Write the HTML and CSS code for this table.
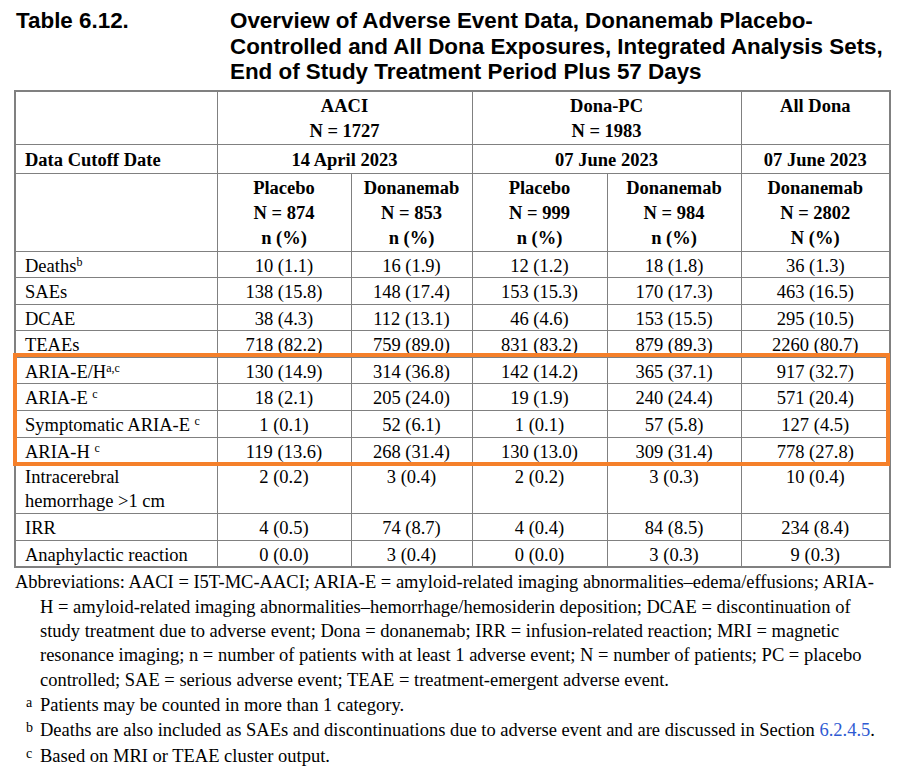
FILE: index.html
```html
<!DOCTYPE html>
<html>
<head>
<meta charset="utf-8">
<link rel="stylesheet" href="styles.css">
</head>
<body>
<div class="title">
  <div class="tnum">Table 6.12.</div>
  <div class="ttext">Overview of Adverse Event Data, Donanemab Placebo-<br>Controlled and All Dona Exposures, Integrated Analysis Sets,<br>End of Study Treatment Period Plus 57 Days</div>
</div>
<div class="tablewrap">
  <table class="ae">
    <colgroup>
      <col class="c1"><col class="c2"><col class="c3"><col class="c4"><col class="c5"><col class="c6">
    </colgroup>
    <thead>
      <tr class="h1">
        <th></th>
        <th colspan="2">AACI<br>N = 1727</th>
        <th colspan="2">Dona-PC<br>N = 1983</th>
        <th>All Dona</th>
      </tr>
      <tr class="h2">
        <th class="lbl">Data Cutoff Date</th>
        <th colspan="2">14 April 2023</th>
        <th colspan="2">07 June 2023</th>
        <th>07 June 2023</th>
      </tr>
      <tr class="h3">
        <th></th>
        <th>Placebo<br>N = 874<br>n (%)</th>
        <th>Donanemab<br>N = 853<br>n (%)</th>
        <th>Placebo<br>N = 999<br>n (%)</th>
        <th>Donanemab<br>N = 984<br>n (%)</th>
        <th>Donanemab<br>N = 2802<br>N (%)</th>
      </tr>
    </thead>
    <tbody>
      <tr><td class="lbl">Deaths<sup>b</sup></td><td>10 (1.1)</td><td>16 (1.9)</td><td>12 (1.2)</td><td>18 (1.8)</td><td>36 (1.3)</td></tr>
      <tr><td class="lbl">SAEs</td><td>138 (15.8)</td><td>148 (17.4)</td><td>153 (15.3)</td><td>170 (17.3)</td><td>463 (16.5)</td></tr>
      <tr><td class="lbl">DCAE</td><td>38 (4.3)</td><td>112 (13.1)</td><td>46 (4.6)</td><td>153 (15.5)</td><td>295 (10.5)</td></tr>
      <tr><td class="lbl">TEAEs</td><td>718 (82.2)</td><td>759 (89.0)</td><td>831 (83.2)</td><td>879 (89.3)</td><td>2260 (80.7)</td></tr>
      <tr><td class="lbl">ARIA-E/H<sup>a,c</sup></td><td>130 (14.9)</td><td>314 (36.8)</td><td>142 (14.2)</td><td>365 (37.1)</td><td>917 (32.7)</td></tr>
      <tr><td class="lbl">ARIA-E <sup>c</sup></td><td>18 (2.1)</td><td>205 (24.0)</td><td>19 (1.9)</td><td>240 (24.4)</td><td>571 (20.4)</td></tr>
      <tr><td class="lbl">Symptomatic ARIA-E <sup>c</sup></td><td>1 (0.1)</td><td>52 (6.1)</td><td>1 (0.1)</td><td>57 (5.8)</td><td>127 (4.5)</td></tr>
      <tr><td class="lbl">ARIA-H <sup>c</sup></td><td>119 (13.6)</td><td>268 (31.4)</td><td>130 (13.0)</td><td>309 (31.4)</td><td>778 (27.8)</td></tr>
      <tr class="two"><td class="lbl">Intracerebral<br>hemorrhage &gt;1 cm</td><td>2 (0.2)</td><td>3 (0.4)</td><td>2 (0.2)</td><td>3 (0.3)</td><td>10 (0.4)</td></tr>
      <tr><td class="lbl">IRR</td><td>4 (0.5)</td><td>74 (8.7)</td><td>4 (0.4)</td><td>84 (8.5)</td><td>234 (8.4)</td></tr>
      <tr><td class="lbl">Anaphylactic reaction</td><td>0 (0.0)</td><td>3 (0.4)</td><td>0 (0.0)</td><td>3 (0.3)</td><td>9 (0.3)</td></tr>
    </tbody>
  </table>
  <div class="highlight"></div>
</div>
<div class="notes">
  <p class="abbr">Abbreviations: AACI = I5T-MC-AACI; ARIA-E = amyloid-related imaging abnormalities–edema/effusions; ARIA-H = amyloid-related imaging abnormalities–hemorrhage/hemosiderin deposition; DCAE = discontinuation of study treatment due to adverse event; Dona = donanemab; IRR = infusion-related reaction; MRI = magnetic resonance imaging; n = number of patients with at least 1 adverse event; N = number of patients; PC = placebo controlled; SAE = serious adverse event; TEAE = treatment-emergent adverse event.</p>
  <div class="fn"><span class="mark">a</span><span>Patients may be counted in more than 1 category.</span></div>
  <div class="fn"><span class="mark">b</span><span>Deaths are also included as SAEs and discontinuations due to adverse event and are discussed in Section <span class="link">6.2.4.5</span>.</span></div>
  <div class="fn"><span class="mark">c</span><span>Based on MRI or TEAE cluster output.</span></div>
</div>
</body>
</html>
```

FILE: styles.css
```css
html, body {
  margin: 0;
  padding: 0;
  background: #ffffff;
}
body {
  padding: 8px 0 0 0;
  color: #000;
  font-family: "Liberation Serif", "Times New Roman", serif;
}
.title {
  display: flex;
  font-family: "Liberation Sans", Arial, sans-serif;
  font-weight: bold;
  font-size: 22.4px;
  line-height: 25.5px;
  white-space: nowrap;
}
.tnum {
  width: 214px;
  padding-left: 16px;
  box-sizing: border-box;
  flex: 0 0 214px;
}
.ttext {
  padding-left: 16px;
}
.tablewrap {
  position: relative;
  margin: 5px 0 0 14px;
  width: 875px;
}
.ae {
  border-collapse: collapse;
  table-layout: fixed;
  width: 875px;
  border: 2px solid #808080;
  font-size: 18.5px;
}
.c1 { width: 202px; }
.c2 { width: 134px; }
.c3 { width: 121px; }
.c4 { width: 135px; }
.c5 { width: 134px; }
.c6 { width: 149px; }
.ae th, .ae td {
  border: 1px solid #808080;
  vertical-align: top;
  text-align: center;
  padding: 0 4px;
  white-space: nowrap;
}
.ae th {
  font-weight: bold;
  line-height: 25px;
}
.h1 th { padding-top: 2px; height: 50px; }
.h2 th { padding-top: 3px; }
.h3 th { padding-top: 2px; }
.ae td {
  line-height: 21.6px;
  padding-top: 4px;
}
.ae tr.two td {
  line-height: 24px;
  padding-top: 1px;
}
.ae .lbl {
  text-align: left;
  padding-left: 9px;
}
sup {
  font-size: 12px;
  line-height: 0;
  vertical-align: 6px;
}
.highlight {
  position: absolute;
  left: -1px;
  top: 263px;
  width: 877px;
  height: 113px;
  box-sizing: border-box;
  border: 4px solid #f5802a;
  pointer-events: none;
}
.notes {
  font-size: 18.5px;
  line-height: 24.3px;
  padding: 2px 0 0 15px;
  width: 880px;
  box-sizing: border-box;
}
.abbr {
  margin: 0;
  padding-left: 25px;
  text-indent: -25px;
}
.fn {
  display: flex;
  margin-top: 1px;
}
.mark {
  flex: 0 0 25px;
  font-size: 14px;
  line-height: 19px;
  padding-left: 11px;
  box-sizing: border-box;
}
.link {
  color: #2f5bd3;
}
```
